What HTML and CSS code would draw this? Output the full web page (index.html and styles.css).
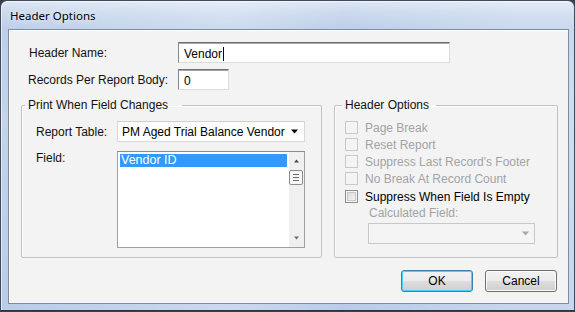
FILE: index.html
```html
<!DOCTYPE html>
<html>
<head>
<meta charset="utf-8">
<link rel="stylesheet" href="styles.css">
</head>
<body>
<div class="window">
  <div class="titlebar"><span class="title">Header Options</span></div>
  <div class="client">
    <div class="form-row row-name">
      <span class="label">Header Name:</span>
      <div class="textbox wide">Vendor<span class="caret"></span></div>
    </div>
    <div class="form-row row-records">
      <span class="label">Records Per Report Body:</span>
      <div class="textbox narrow">0</div>
    </div>
    <div class="groups">
      <fieldset class="group group-left">
        <legend class="legend-left">Print When Field Changes</legend>
        <div class="field-row">
          <span class="flabel">Report Table:</span>
          <div class="combo">
            <span class="combo-text">PM Aged Trial Balance Vendor</span>
            <svg class="combo-arrow" width="8" height="5" viewBox="0 0 8 5"><path d="M0 0.5 H7 L3.5 4.5 Z" fill="#000"/></svg>
          </div>
        </div>
        <div class="field-row list-row">
          <span class="flabel">Field:</span>
          <div class="listbox">
            <div class="list-items">
              <div class="item selected">Vendor ID</div>
            </div>
            <svg class="scrollbar" width="15" height="95" viewBox="0 0 15 95">
              <rect x="0" y="0" width="15" height="95" fill="#f0f0f0"/>
              <path d="M5 10.5 H10 L7.5 7.5 Z" fill="#4a4a4a"/>
              <rect x="0.5" y="18.5" width="13" height="14" rx="1.5" fill="#f6f6f6" stroke="#8c8c8c"/>
              <path d="M4 22.5 H10 M4 25.5 H10 M4 28.5 H10" stroke="#6a6a6a" stroke-width="1"/>
              <path d="M5 84.5 H10 L7.5 87.5 Z" fill="#6a6a6a"/>
            </svg>
          </div>
        </div>
      </fieldset>
      <fieldset class="group group-right">
        <legend class="legend-right">Header Options</legend>
        <div class="check disabled"><span class="box"></span><span>Page Break</span></div>
        <div class="check disabled"><span class="box"></span><span>Reset Report</span></div>
        <div class="check disabled"><span class="box"></span><span>Suppress Last Record's Footer</span></div>
        <div class="check disabled"><span class="box"></span><span>No Break At Record Count</span></div>
        <div class="check enabled"><span class="box"></span><span>Suppress When Field Is Empty</span></div>
        <div class="calc-label">Calculated Field:</div>
        <div class="combo disabled-combo">
          <svg class="combo-arrow" width="8" height="5" viewBox="0 0 8 5"><path d="M0 0.5 H7 L3.5 4.5 Z" fill="#a8a8a8"/></svg>
        </div>
      </fieldset>
    </div>
    <div class="buttons">
      <button class="btn default">OK</button>
      <button class="btn">Cancel</button>
    </div>
  </div>
</div>
</body>
</html>
```

FILE: styles.css
```css
html, body {
  margin: 0;
  padding: 0;
}
body {
  background: #3b3f47;
  width: 575px;
  height: 312px;
  overflow: hidden;
  font-family: "Liberation Sans", Arial, sans-serif;
  font-size: 12px;
  color: #111;
}
.window {
  box-sizing: border-box;
  width: 575px;
  height: 311px;
  border: 1px solid #3f4a5c;
  border-bottom-color: #2c3442;
  border-radius: 7px 7px 0 0;
  background:
    linear-gradient(90deg, rgba(255,255,255,0) 0%, rgba(255,255,255,0.25) 40%, rgba(255,255,255,0) 60%, rgba(255,255,255,0.2) 90%),
    linear-gradient(180deg, #dde7f5 0px, #cbd9ee 12px, #bccfe9 28px, #c3d4ec 120px, #b9cce7 311px);
  display: flex;
  flex-direction: column;
  padding: 0 5px 6px 7px;
  box-shadow: inset 1px 1px 0 rgba(255,255,255,0.6);
}
.titlebar {
  height: 28px;
  display: flex;
  align-items: center;
  padding-left: 2px;
  flex: none;
}
.title {
  font-family: "Noto Sans", "Open Sans", sans-serif;
  font-size: 11.5px;
  color: #000;
  text-shadow: 0 0 6px rgba(255,255,255,0.9);
  margin-top: 1px;
}
.client {
  flex: 1;
  box-sizing: border-box;
  border: 1px solid #7d8ca3;
  background: #f3f3f3;
  box-shadow: inset 1px 1px 0 #ffffff;
  padding: 12px 0 0 12px;
  display: flex;
  flex-direction: column;
}
.form-row {
  display: flex;
  align-items: center;
  height: 21px;
}
.row-records {
  margin-top: 6px;
}
.label {
  width: 149px;
  margin-left: 8px;
  flex: none;
}
.row-records .label {
  margin-left: 7px;
  width: 150px;
}
.textbox {
  box-sizing: border-box;
  height: 21px;
  background: #fff;
  border: 1px solid;
  border-color: #6f6f6f #dcdcdc #dcdcdc #8a8a8a;
  box-shadow: inset 0 1px 0 #a8a8a8;
  padding: 2px 0 0 5px;
  line-height: 16px;
  color: #000;
  display: flex;
  align-items: center;
}
.wide { width: 272px; }
.narrow { width: 51px; }
.caret {
  display: inline-block;
  width: 1px;
  height: 14px;
  background: #000;
  margin-left: 1px;
}
.groups {
  display: flex;
  gap: 12px;
  margin-top: 8px;
}
.group {
  box-sizing: border-box;
  margin: 0;
  height: 160px;
  border: 1px solid #c2c2c2;
  border-radius: 2px;
  box-shadow: inset 1px 1px 0 #fdfdfd;
}
legend {
  font-size: 12px;
  line-height: 14px;
  color: #111;
}
.legend-left {
  margin-left: -11px;
  padding: 0 14px 0 3px;
}
.legend-right {
  margin-left: -3px;
  padding: 0 7px 0 3px;
}
.group-left {
  width: 301px;
  padding: 9px 0 0 14px;
}
.group-right {
  width: 224px;
  padding: 7px 0 0 10px;
}
.field-row {
  display: flex;
  align-items: center;
}
.list-row {
  align-items: flex-start;
  margin-top: 9px;
}
.flabel {
  width: 81px;
  flex: none;
}
.list-row .flabel {
  line-height: 14px;
  margin-top: 0;
}
.combo {
  box-sizing: border-box;
  width: 188px;
  height: 21px;
  background: #fff;
  border: 1px solid #dadada;
  border-top-color: #cfcfcf;
  display: flex;
  align-items: center;
  padding-left: 4px;
  overflow: hidden;
  position: relative;
}
.combo-text {
  white-space: nowrap;
  overflow: hidden;
  width: 166px;
  flex: none;
  color: #000;
}
.combo-arrow {
  margin-left: auto;
  margin-right: 5px;
  flex: none;
}
.listbox {
  box-sizing: border-box;
  width: 188px;
  height: 97px;
  border: 1px solid #a0a0a0;
  border-top-color: #8c8c8c;
  background: #fff;
  display: flex;
}
.list-items {
  flex: 1;
  padding: 2px 2px 0 2px;
}
.item {
  height: 13px;
  line-height: 13px;
  font-size: 12.5px;
  padding-left: 1px;
}
.selected {
  background: #3399ff;
  color: #fff;
}
.scrollbar {
  display: block;
  flex: none;
}
.check {
  display: flex;
  align-items: center;
  height: 17px;
  gap: 7px;
  white-space: nowrap;
}
.box {
  box-sizing: border-box;
  width: 13px;
  height: 13px;
  flex: none;
}
.disabled {
  color: #a3a3a3;
}
.disabled .box {
  border: 1px solid #c9c9c9;
  background: #f4f4f4;
}
.enabled {
  color: #000;
  margin-top: 1px;
}
.enabled .box {
  border: 1px solid #8e8f8f;
  background: linear-gradient(135deg, #d6d6d6 0%, #eaeaea 60%, #f6f6f6 100%);
  box-shadow: inset 0 0 0 1px #f4f4f4, inset 0 0 0 2px #c8c8c8;
}
.calc-label {
  color: #a3a3a3;
  margin-left: 24px;
  margin-top: 1px;
  line-height: 14px;
}
.disabled-combo {
  width: 167px;
  height: 21px;
  margin-left: 23px;
  margin-top: 3px;
  background: #f4f4f4;
  border-color: #c8c8c8;
}
.disabled-combo .combo-arrow {
  margin-right: 4px;
}
.buttons {
  display: flex;
  justify-content: flex-end;
  gap: 12px;
  margin-top: 12px;
  margin-right: 11px;
}
.btn {
  box-sizing: border-box;
  width: 72px;
  height: 22px;
  font-family: "Liberation Sans", Arial, sans-serif;
  font-size: 12px;
  color: #000;
  border: 1px solid #707070;
  border-radius: 3px;
  background: linear-gradient(180deg, #f2f2f2 0%, #ebebeb 48%, #dddddd 52%, #cfcfcf 100%);
  box-shadow: inset 0 0 0 1px #fbfbfb;
  padding: 0;
}
.btn.default {
  border-color: #3c7fb1;
  box-shadow: inset 0 0 0 1px #48d1fc;
}
```
